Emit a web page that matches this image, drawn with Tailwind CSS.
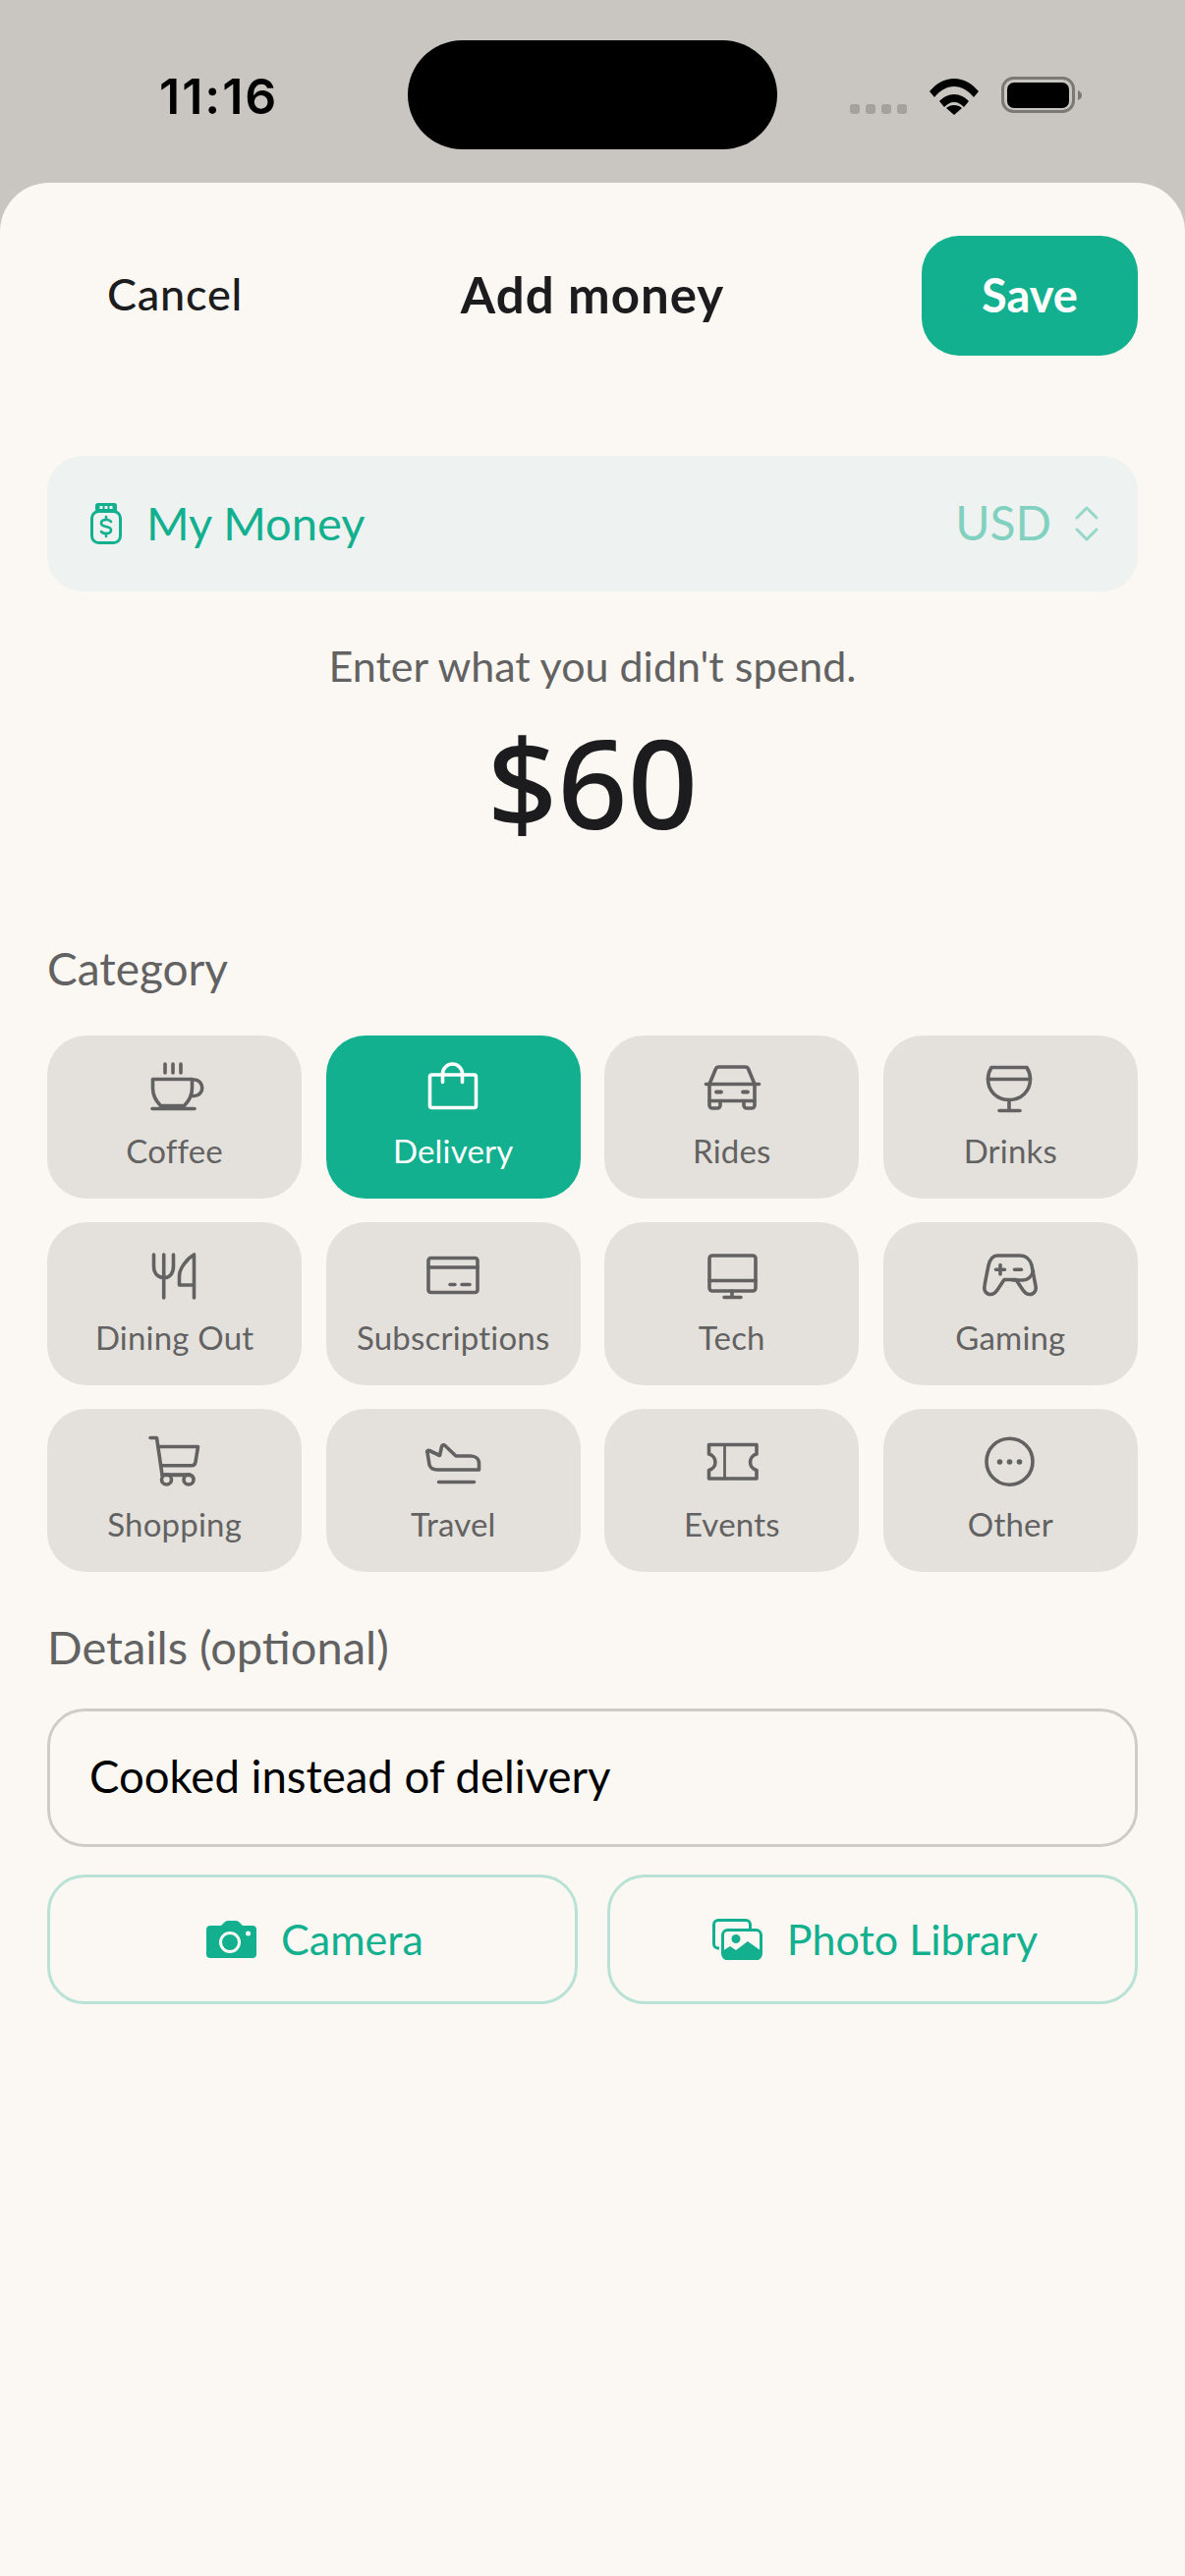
<!DOCTYPE html>
<html lang="en">
<head>
    <meta charset="UTF-8">
    <meta name="viewport" content="width=device-width, initial-scale=1.0">
    <title>Add money</title>
    <script src="https://cdn.jsdelivr.net/npm/@tailwindcss/browser@4"></script>
</head>
<body class="w-[1206px] h-[2622px] overflow-hidden bg-[#c9c6c1] font-['Lato','Noto_Sans',sans-serif]">

    <!-- status bar -->
    <div class="relative h-[186px]">
        <div class="absolute left-[415px] top-[41px] w-[376px] h-[111px] rounded-[56px] bg-black"></div>
        <div class="flex items-start pl-[162px] pt-[68px]">
            <span class="w-[703px] font-['Inter',sans-serif] font-semibold text-[50px] leading-[60px] tracking-[2px] text-black">11:16</span>
            <div class="flex gap-[6px] mt-[38px] w-[81px]">
                <span class="w-[10px] h-[10px] rounded-[3px] bg-[#a5a29e]"></span>
                <span class="w-[10px] h-[10px] rounded-[3px] bg-[#a5a29e]"></span>
                <span class="w-[10px] h-[10px] rounded-[3px] bg-[#a5a29e]"></span>
                <span class="w-[10px] h-[10px] rounded-[3px] bg-[#a5a29e]"></span>
            </div>
            <svg width="50" height="38" viewBox="0 0 50 38" class="mt-[11px]">
                <path d="M0 14C7 6 15 1 25 1s18 5 25 13l-5 6C39 13 33 9 25 9S11 13 5 20z" fill="#000"/>
                <path d="M10 24c4-4 9-7 15-7s11 3 15 7l-5 6c-3-3-6-5-10-5s-7 2-10 5z" fill="#000"/>
                <path d="M17 31c2-2 5-3 8-3s6 1 8 3l-8 7z" fill="#000"/>
            </svg>
            <svg width="83" height="38" viewBox="0 0 83 38" class="mt-[10px] ml-[23px]">
                <rect x="1.5" y="1.5" width="72" height="34" rx="11" fill="none" stroke="#7b7975" stroke-width="3"/>
                <rect x="6" y="6" width="63" height="26" rx="7" fill="#000"/>
                <path d="M78 14c3 1 4 3 4 5s-1 4-4 5z" fill="#7b7975"/>
            </svg>
        </div>
    </div>

    <!-- sheet -->
    <div class="h-[2436px] rounded-t-[50px] bg-[#fbf8f3] px-[48px] pt-[54px]">

        <div class="grid grid-cols-3 items-center h-[122px]">
            <button class="text-left pl-[61px] pb-[2px] text-[45px] font-medium tracking-[0.8px] text-[#1c1c1e]">Cancel</button>
            <h1 class="text-center pb-[2px] text-[51px] font-bold tracking-[1px] text-[#1c1c1e] whitespace-nowrap">Add money</h1>
            <div class="flex justify-end">
                <button class="w-[220px] h-[122px] pb-[2px] rounded-[38px] bg-[#12b08f] text-[47px] font-bold text-white">Save</button>
            </div>
        </div>

        <div class="flex items-center h-[138px] mt-[102px] rounded-[36px] bg-[#eef2f0] pl-[44px] pr-[40px]">
            <svg width="32" height="42" viewBox="0 0 32 42">
                <rect x="1.5" y="8.5" width="29" height="32" rx="7" fill="none" stroke="#12b08f" stroke-width="3"/>
                <rect x="5" y="0" width="22" height="9" rx="2.5" fill="#12b08f"/>
                <path d="M9.5 3h3v3h-3zM14.5 3h3v3h-3zM19.5 3h3v3h-3z" fill="#eef2f0"/>
                <path d="M21 19c-1-1.500-2.500-2-5-2-3 0-5 1.300-5 3.500 0 2.200 2 3 5 3.500s5 1.300 5 3.500-2 3.500-5 3.500c-2.500 0-4-.5-5-2M16 14v3M16 31v3" fill="none" stroke="#12b08f" stroke-width="2.600" stroke-linecap="round"/>
            </svg>
            <span class="ml-[25px] pb-[2px] text-[47px] text-[#12b08f]">My Money</span>
            <span class="ml-auto pb-[2px] text-[48px] text-[#12b08f]/50">USD</span>
            <svg width="24" height="36" viewBox="0 0 24 36" class="ml-[24px]">
                <path d="M2 12 12 2l10 10M2 24l10 10 10-10" fill="none" stroke="#12b08f" stroke-opacity="0.4" stroke-width="3" stroke-linecap="round" stroke-linejoin="round"/>
            </svg>
        </div>

        <p class="mt-[50px] text-center text-[43px] leading-[52px] text-[#636262]">Enter what you didn't spend.</p>
        <p class="mt-[22px] text-center font-['Noto_Sans',sans-serif] font-medium text-[125px] leading-[140px] text-[#1c1c1e]">$60</p>

        <p class="mt-[92px] text-[46px] leading-[56px] text-[#636262]">Category</p>

        <div class="grid grid-cols-4 gap-x-[24.3px] gap-y-[24px] mt-[40px]">

            <div class="flex flex-col items-center h-[166px] pt-[24px] rounded-[40px] bg-[#e4e1dc] text-[#636262]">
                <svg width="60" height="60" viewBox="0 0 60 60" fill="none" stroke="currentColor" stroke-width="3.600" stroke-linecap="round" stroke-linejoin="round">
                    <path d="M20 5v9M28 5v9M36 5v9"/>
                    <path d="M7.500 20.500h40v9c0 7-3 13-8 18h-24c-5-5-8-11-8-18z"/>
                    <path d="M47.500 21h2.500a7.500 8 0 0 1 0 16.500h-4"/>
                    <path d="M7 50.500h43"/>
                </svg>
                <span class="mt-[13px] text-[33px] leading-[40px] tracking-[0.2px]">Coffee</span>
            </div>

            <div class="flex flex-col items-center h-[166px] pt-[24px] rounded-[40px] bg-[#12b08f] text-white">
                <svg width="60" height="60" viewBox="0 0 60 60" fill="none" stroke="currentColor" stroke-width="3.600" stroke-linecap="round" stroke-linejoin="round">
                    <rect x="6.500" y="16" width="47" height="33.500" rx="2"/>
                    <path d="M19.500 23.500V15a10 10 0 0 1 20 0v8.500"/>
                </svg>
                <span class="mt-[13px] text-[33px] leading-[40px] tracking-[0.2px]">Delivery</span>
            </div>

            <div class="flex flex-col items-center h-[166px] pt-[24px] rounded-[40px] bg-[#e4e1dc] text-[#636262]">
                <svg width="60" height="60" viewBox="0 0 60 60" fill="none" stroke="currentColor" stroke-width="3.600" stroke-linecap="round" stroke-linejoin="round">
                    <path d="M7 25.500 13 11c.6-2 1.500-3 3.500-3h27c2 0 3 1 3.500 3l6 14.500"/>
                    <path d="M3.500 25.500h54"/>
                    <path d="M7 25.500v17h46v-17"/>
                    <path d="M7 42.500V47a3 3 0 0 0 3 3h5a3 3 0 0 0 3-3v-4.500M42 42.500V47a3 3 0 0 0 3 3h5a3 3 0 0 0 3-3v-4.500"/>
                    <path d="M14 33.500h5M41 33.500h5" stroke-width="3.800"/>
                </svg>
                <span class="mt-[13px] text-[33px] leading-[40px] tracking-[0.2px]">Rides</span>
            </div>

            <div class="flex flex-col items-center h-[166px] pt-[24px] rounded-[40px] bg-[#e4e1dc] text-[#636262]">
                <svg width="60" height="60" viewBox="0 0 60 60" fill="none" stroke="currentColor" stroke-width="3.600" stroke-linecap="round" stroke-linejoin="round">
                    <path d="M11 8.500h36c2.500 4 3.500 8 3.500 12 0 12-9 21-21.500 21s-21.500-9-21.500-21c0-4 1-8 3.500-12z"/>
                    <path d="M7.500 20.500h43M29 41.500V52M19 52.500h21"/>
                </svg>
                <span class="mt-[13px] text-[33px] leading-[40px] tracking-[0.2px]">Drinks</span>
            </div>

            <div class="flex flex-col items-center h-[166px] pt-[24px] rounded-[40px] bg-[#e4e1dc] text-[#636262]">
                <svg width="60" height="60" viewBox="0 0 60 60" fill="none" stroke="currentColor" stroke-width="3.600" stroke-linecap="round" stroke-linejoin="round">
                    <path d="M8.500 9v12c0 7 4 11 10 11.500S28.500 28 28.500 21V9M18.700 9v44"/>
                    <path d="M49.500 9v44M49.500 9c-7 4-15 14-15 22v9h15"/>
                </svg>
                <span class="mt-[13px] text-[33px] leading-[40px] tracking-[0.2px]">Dining Out</span>
            </div>

            <div class="flex flex-col items-center h-[166px] pt-[24px] rounded-[40px] bg-[#e4e1dc] text-[#636262]">
                <svg width="60" height="60" viewBox="0 0 60 60" fill="none" stroke="currentColor" stroke-width="3.600" stroke-linecap="round" stroke-linejoin="round">
                    <rect x="5" y="12.500" width="50" height="35" rx="2.500"/>
                    <path d="M5 22h50"/>
                    <path d="M27 39.500h5M39 39.500h8" stroke-width="3.600"/>
                </svg>
                <span class="mt-[13px] text-[33px] leading-[40px] tracking-[0.2px]">Subscriptions</span>
            </div>

            <div class="flex flex-col items-center h-[166px] pt-[24px] rounded-[40px] bg-[#e4e1dc] text-[#636262]">
                <svg width="60" height="60" viewBox="0 0 60 60" fill="none" stroke="currentColor" stroke-width="3.600" stroke-linecap="round" stroke-linejoin="round">
                    <rect x="7" y="10" width="47" height="36" rx="3"/>
                    <path d="M7 35.500h47M30 46v6M22 52.500h17"/>
                </svg>
                <span class="mt-[13px] text-[33px] leading-[40px] tracking-[0.2px]">Tech</span>
            </div>

            <div class="flex flex-col items-center h-[166px] pt-[24px] rounded-[40px] bg-[#e4e1dc] text-[#636262]">
                <svg width="60" height="60" viewBox="0 0 60 60" fill="none" stroke="currentColor" stroke-width="3.600" stroke-linecap="round" stroke-linejoin="round">
                    <path d="M17 10h23c6 0 10.500 4 12 10l4 21c1 5-2 8.500-6 8.500-3 0-5-1.500-7-4.500l-7-10.500H24L17 45c-2 3-4 4.500-7 4.500-4 0-7-3.500-6-8.500l1-6 3-15c1.500-6 4-10 9-10z"/>
                    <path d="M33 35h10c5 0 9-4 10.500-9"/>
                    <path d="M20 19.500v9.500M15.500 24.300h9M34.500 24.300h7" stroke-width="3.600"/>
                </svg>
                <span class="mt-[13px] text-[33px] leading-[40px] tracking-[0.2px]">Gaming</span>
            </div>

            <div class="flex flex-col items-center h-[166px] pt-[24px] rounded-[40px] bg-[#e4e1dc] text-[#636262]">
                <svg width="60" height="60" viewBox="0 0 60 60" fill="none" stroke="currentColor" stroke-width="3.600" stroke-linecap="round" stroke-linejoin="round">
                    <path d="M5 5.500h6.500l5.500 37.500h28"/>
                    <path d="M13 14.500h40.500L51 30c-.4 2.500-2 3.700-4 3.700H15.500"/>
                    <circle cx="21.500" cy="48" r="5"/>
                    <circle cx="44" cy="48" r="5"/>
                    <path d="M17 43.500h27.500a4.500 4.500 0 0 1 4.500 3.500"/>
                </svg>
                <span class="mt-[13px] text-[33px] leading-[40px] tracking-[0.2px]">Shopping</span>
            </div>

            <div class="flex flex-col items-center h-[166px] pt-[24px] rounded-[40px] bg-[#e4e1dc] text-[#636262]">
                <svg width="60" height="60" viewBox="0 0 60 60" fill="none" stroke="currentColor" stroke-width="3.600" stroke-linecap="round" stroke-linejoin="round">
                    <path d="M4 20.500c-1-1.500.5-2.500 2-2l10.500 5 2-9c.5-2 2.500-2 3.500-1L33 24h15c5 0 8.500 3 8.500 7.500V38H14c-4 0-7-2-8-5z"/>
                    <path d="M15.500 50.500h36"/>
                </svg>
                <span class="mt-[13px] text-[33px] leading-[40px] tracking-[0.2px]">Travel</span>
            </div>

            <div class="flex flex-col items-center h-[166px] pt-[24px] rounded-[40px] bg-[#e4e1dc] text-[#636262]">
                <svg width="60" height="60" viewBox="0 0 60 60" fill="none" stroke="currentColor" stroke-width="3.600" stroke-linecap="round" stroke-linejoin="round">
                    <path d="M6.500 12.500H55V22a8.500 8.500 0 0 0 0 16.500V47H6.500v-8.500a8.500 8.500 0 0 0 0-16.500z"/>
                    <path d="M22.500 12.500V47" stroke-width="2.800"/>
                </svg>
                <span class="mt-[13px] text-[33px] leading-[40px] tracking-[0.2px]">Events</span>
            </div>

            <div class="flex flex-col items-center h-[166px] pt-[24px] rounded-[40px] bg-[#e4e1dc] text-[#636262]">
                <svg width="60" height="60" viewBox="0 0 60 60" fill="none" stroke="currentColor" stroke-width="3.600">
                    <circle cx="29.500" cy="29.700" r="23.500"/>
                    <circle cx="19.500" cy="30" r="2.800" fill="currentColor" stroke="none"/>
                    <circle cx="29.500" cy="30" r="2.800" fill="currentColor" stroke="none"/>
                    <circle cx="39.500" cy="30" r="2.800" fill="currentColor" stroke="none"/>
                </svg>
                <span class="mt-[13px] text-[33px] leading-[40px] tracking-[0.2px]">Other</span>
            </div>
        </div>

        <p class="mt-[48px] text-[47px] leading-[56px] text-[#636262]">Details (optional)</p>

        <div class="flex items-center h-[141px] mt-[35px] pb-[2px] rounded-[38px] border-[3px] border-[#cfccc7] pl-[40px] text-[45.500px] text-black">Cooked instead of delivery</div>

        <div class="grid grid-cols-2 gap-[30px] mt-[28px]">
            <button class="flex items-center justify-center gap-[25px] h-[132px] pl-[5px] rounded-[38px] border-[3px] border-[#b9e2d6] text-[43px] text-[#12b08f]">
                <svg width="51" height="38" viewBox="0 0 51 38">
                    <path d="M4 5h11l3-3c1-1 2-2 4-2h8c2 0 3 1 4 2l3 3h10c2.500 0 4 1.500 4 4v25c0 2.500-1.500 4-4 4H4c-2.500 0-4-1.500-4-4V9c0-2.500 1.500-4 4-4z" fill="#12b08f"/>
                    <circle cx="24" cy="22" r="9.500" fill="none" stroke="#fbf8f3" stroke-width="3"/>
                    <circle cx="42.500" cy="13" r="2.500" fill="#fbf8f3"/>
                </svg>
                Camera
            </button>
            <button class="flex items-center justify-center gap-[25px] h-[132px] pl-[5px] rounded-[38px] border-[3px] border-[#b9e2d6] text-[43px] text-[#12b08f]">
                <svg width="51" height="42" viewBox="0 0 51 42">
                    <path d="M7 30H6c-2.500 0-4.500-2-4.500-4.500V6c0-2.500 2-4.500 4.500-4.500h28c2.500 0 4.500 2 4.500 4.500v4" fill="none" stroke="#12b08f" stroke-width="3"/>
                    <rect x="10.500" y="11.500" width="39" height="29" rx="5" fill="#fbf8f3" stroke="#12b08f" stroke-width="3"/>
                    <path d="M10 36V33l8-5 6 4 12-9 14 10v4c0 3-2 5-5 5H15c-3 0-5-2-5-6z" fill="#12b08f"/>
                    <circle cx="24" cy="20.500" r="4.500" fill="#12b08f"/>
                </svg>
                Photo Library
            </button>
        </div>
    </div>
</body>
</html>
